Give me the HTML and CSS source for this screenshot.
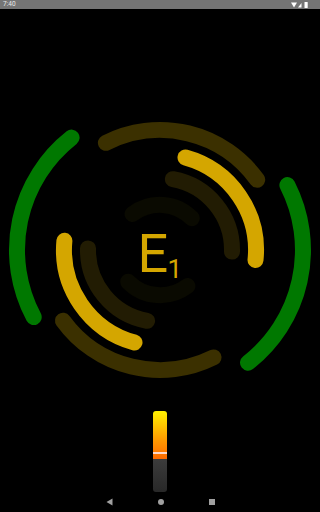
FILE: index.html
```html
<!DOCTYPE html>
<html>
<head>
<meta charset="utf-8">
<link rel="stylesheet" href="styles.css">
</head>
<body>
<div class="screen">
  <div class="status">
    <span class="time">7:40</span>
    <span class="sys-icons">
      <svg width="18" height="6" viewBox="0 0 18 6">
        <path d="M0 0.5 L6 0.5 L3 5.5 Z" fill="#fff"/>
        <path d="M7 5.5 L10.5 1 L10.5 5.5 Z" fill="#fff"/>
        <rect x="13.5" y="0" width="3.2" height="6" rx="0.5" fill="#fff"/>
      </svg>
    </span>
  </div>
  <svg class="dial" width="320" height="391" viewBox="0 -1 320 391">
    <g fill="none" stroke-width="16" stroke-linecap="round">
      <path class="arc-green" d="M71.6 127.6 A143 143 0 0 0 33.7 307.1"/>
      <path class="arc-green" d="M287.4 175.1 A143 143 0 0 1 248 352.7"/>
      <path class="arc-brown" d="M105.9 132.8 A120 120 0 0 1 257.2 169.7"/>
      <path class="arc-brown" d="M213.5 347.4 A120 120 0 0 1 63 310.7"/>
      <path class="arc-yellow" d="M185.5 147.5 A96 96 0 0 1 255.5 250"/>
      <path class="arc-yellow" d="M134.5 332.5 A96 96 0 0 1 64.4 230.8"/>
      <path class="arc-dark" d="M172.9 169.2 A72 72 0 0 1 232 241.6"/>
      <path class="arc-dark" d="M147.1 310.8 A72 72 0 0 1 88 238.4"/>
      <path class="arc-faint" d="M132.5 204 A45 45 0 0 1 191.8 208.2"/>
      <path class="arc-faint" d="M187.5 276 A45 45 0 0 1 128.2 271.8"/>
    </g>
    <text class="label-main" x="137.5" y="261.7">E</text>
    <text class="label-sub" x="167.5" y="268.3">1</text>
  </svg>
  <div class="slider-wrap">
    <div class="slider">
      <div class="slider-fill"><div class="slider-mark"></div></div>
      <div class="slider-track"></div>
    </div>
  </div>
  <div class="navbar">
    <svg class="nav-icon" width="7" height="8" viewBox="0 0 7 8"><path d="M6.5 0.5 L6.5 7.5 L0.5 4 Z" fill="#a0a0a0"/></svg>
    <span class="nav-home"></span>
    <span class="nav-recent"></span>
  </div>
</div>
</body>
</html>
```
FILE: styles.css
```css
html, body {
  margin: 0;
  padding: 0;
  background: #000;
}
.screen {
  width: 320px;
  height: 512px;
  display: flex;
  flex-direction: column;
  background: #000;
  overflow: hidden;
  font-family: Roboto, "Liberation Sans", sans-serif;
}
.status {
  height: 9px;
  background: #757575;
  display: flex;
  align-items: center;
  justify-content: space-between;
  padding: 0 11px 0 3px;
}
.time {
  color: #e8e8e8;
  font-size: 6.5px;
  line-height: 9px;
}
.sys-icons {
  display: flex;
  align-items: center;
}
.sys-icons svg {
  display: block;
}
.dial {
  display: block;
  flex: none;
}
.arc-green { stroke: #007800; }
.arc-brown { stroke: #3b3000; }
.arc-yellow { stroke: #d4a600; }
.arc-dark { stroke: #221c03; }
.arc-faint { stroke: #0a0a01; }
.label-main {
  font-family: Roboto, "Liberation Sans", sans-serif;
  font-size: 54px;
  fill: #d4a600;
}
.label-sub {
  font-family: Roboto, "Liberation Sans", sans-serif;
  font-size: 26px;
  fill: #d4a600;
}
.slider-wrap {
  display: flex;
  justify-content: center;
  padding-top: 11px;
  flex: none;
}
.slider {
  width: 14px;
  height: 81px;
  border-radius: 3px;
  overflow: hidden;
  display: flex;
  flex-direction: column;
}
.slider-fill {
  height: 48px;
  background: linear-gradient(#fff200, #ff9a00 60%, #ff6a00);
  position: relative;
}
.slider-mark {
  position: absolute;
  left: 0;
  right: 0;
  top: 41px;
  height: 1.5px;
  background: #ffd8c8;
}
.slider-track {
  flex: 1;
  background: linear-gradient(#3c3c3c, #282828);
}
.navbar {
  flex: 1;
  display: flex;
  align-items: center;
  justify-content: center;
  gap: 45px;
}
.nav-icon {
  display: block;
}
.nav-home {
  width: 6px;
  height: 6px;
  border-radius: 50%;
  background: #a0a0a0;
}
.nav-recent {
  width: 6px;
  height: 6px;
  background: #a0a0a0;
}
```
